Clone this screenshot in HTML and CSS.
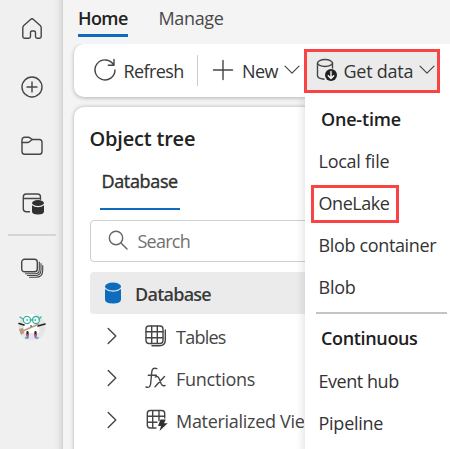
FILE: index.html
```html
<!DOCTYPE html>
<html lang="en">
<head>
<meta charset="utf-8">
<title>Object tree</title>
<link rel="stylesheet" href="styles.css">
</head>
<body>
<div class="app">
  <nav class="rail">
    <div class="rail-item"><svg width="24" height="24" viewBox="0 0 24 24"><path d="M2.800 10.700q0-1.300 1-2.200l6.800-6.100q1.400-1.200 2.800 0l6.800 6.100q1 .9 1 2.200v8.800q0 1.700-1.700 1.700h-2.300q-1.700 0-1.700-1.700v-4q0-1.500-1.500-1.500h-2q-1.500 0-1.500 1.500v4q0 1.700-1.700 1.700H4.500q-1.700 0-1.700-1.700z"/></svg></div>
    <div class="rail-item"><svg width="24" height="24" viewBox="0 0 24 24"><circle cx="12" cy="12" r="10"/><path d="M12 7v10M7 12h10"/></svg></div>
    <div class="rail-item"><svg width="24" height="24" viewBox="0 0 24 24"><path d="M2 17.500V6q0-2.800 2.800-2.800h3.500q1 0 1.700.7L12.200 5.500h7q2.800 0 2.800 2.800v9.200q0 2.800-2.800 2.800H4.800Q2 20.300 2 17.500z"/><path d="M2 8.500h5.700q1 0 1.700-.7l2.800-2.300"/></svg></div>
    <div class="rail-item"><svg width="24" height="24" viewBox="0 0 24 24"><path d="M9.500 19.700H6.300q-3 0-3-3V5q0-3 3-3h11.200q3 0 3 3v2.300M3.300 6.500h17.200"/><g class="solid"><ellipse cx="18" cy="11" rx="6" ry="2.900"/><path d="M12 13.200q2.200 2 6 2t6-2v6.300q0 3-6 3t-6-3z"/></g></svg></div>
    <hr class="rail-line">
    <div class="rail-item stack"><svg width="24" height="24" viewBox="0 0 24 24"><rect x="1.700" y="2.300" width="15.600" height="12.500" rx="2.800"/><path d="M19.300 5v7.500q0 4.300-4.300 4.300H5.500M21 6.500v6.500q0 5.500-6 5.500H7.500M22.700 8.500v5q0 6.800-7 6.800H9.500" stroke-width="1.100"/></svg></div>
    <div class="rail-item"><svg width="28" height="28" viewBox="0 0 28 28" class="avatar"><circle cx="14" cy="14" r="13.500" fill="#e5e5e5"/><path d="M4 4q9-7 18 1l-1 15H7z" fill="#fff"/><path d="M1 10.500l5 1.500M20 13l7-2" stroke="#222" stroke-width="1.700"/><path d="M3 19l4-2 14-6" stroke="#ba9b7d" stroke-width="1.500"/><path d="M1 16l4-1 1 5-3 2z" fill="#ba9b7d"/><g stroke="#35b7a1" stroke-width="1.300" fill="#fff"><circle cx="9" cy="7" r="3.700"/><circle cx="18" cy="7" r="3.500"/><path d="M2 4l3 2M12 7h3M21 6l2-2"/></g><path d="M9 7h.5M17 7h.5M13 12.500v1" stroke="#222" stroke-width="1"/><path d="M9.500 19v3M17.500 19v3" stroke="#222" stroke-width="2.200"/><path d="M9.500 22v2M17.500 22v2" stroke="#d13e9c" stroke-width="2.200"/><path d="M7.500 25h2.500M18 25h2" stroke="#35abc1" stroke-width="1.500"/></svg></div>
  </nav>
  <main class="main">
    <div class="tabs"><span class="tab active"><span class="t-home">Home</span></span><span class="tab t-manage">Manage</span></div>
    <div class="toolbar">
      <svg class="i-refresh" width="24" height="24" viewBox="0 0 24 24"><path d="M20.200 6.200A10 10 0 1 0 22 12M21 1.500v5.700h-5.700"/></svg>
      <span class="t-refresh">Refresh</span>
      <i class="sep"></i>
      <svg class="i-plus" width="22" height="22" viewBox="0 0 22 22"><path d="M11 1.500v19M1.500 11h19"/></svg>
      <span class="t-new">New</span>
      <svg class="chev" width="16" height="10" viewBox="0 0 16 10"><path d="M1 1.200l7 7 7-7"/></svg>
      <div class="get-data">
        <svg class="i-data" width="22" height="24" viewBox="0 0 22 24"><ellipse cx="9" cy="5" rx="7.500" ry="3.500"/><path d="M1.500 5v12.500q0 3 6.500 3.700M16.500 5v5"/><circle cx="15" cy="17" r="6" class="dot"/><path class="arrow" d="M15 13.500v7M12.300 17.800l2.700 2.700 2.700-2.700"/></svg>
        <span class="t-get">Get data</span>
        <svg class="chev" width="16" height="10" viewBox="0 0 16 10"><path d="M1 1.200l7 7 7-7"/></svg>
      </div>
    </div>
    <section class="panel">
      <h2><span class="t-object">Object tree</span></h2>
      <div class="panel-tab"><span class="t-dbtab">Database</span></div>
      <div class="search"><svg width="20" height="20" viewBox="0 0 20 20"><circle cx="8" cy="8" r="6.700"/><path d="M13 13l6 6"/></svg><span class="t-search">Search</span></div>
      <div class="row root"><svg width="18" height="22" viewBox="0 0 18 22"><ellipse cx="9" cy="4.500" rx="8" ry="4"/><path d="M1 7q3 2.700 8 2.700T17 7v10.500q0 4-8 4t-8-4z"/></svg><span class="t-dbrow">Database</span></div>
      <div class="row"><svg class="expand" width="10" height="18" viewBox="0 0 10 18"><path d="M1.200 1.500L8.800 9l-7.600 7.500"/></svg><svg class="kind" width="24" height="24" viewBox="0 0 24 24"><rect x="2" y="2" width="17" height="17.500" rx="3"/><path d="M7.700 2v17.500M13.300 2v17.500M2 7.800h17M2 13.700h17M21.300 6v10q0 5.700-5.700 5.700H8"/></svg><span class="t-tables">Tables</span></div>
      <div class="row"><svg class="expand" width="10" height="18" viewBox="0 0 10 18"><path d="M1.200 1.500L8.800 9l-7.600 7.500"/></svg><svg class="kind" width="24" height="24" viewBox="0 0 24 24"><path d="M12.800 2.700q-4.500-1.700-5 3L6.600 18q-.5 4.500-4.600 3M4.300 9.300h8M11.300 11q2.500-1.500 3.800 1.500l2.200 5.500q1.200 2.500 3.700 1.500M20.500 10.500L11 20.700"/></svg><span class="t-functions">Functions</span></div>
      <div class="row"><svg class="expand" width="10" height="18" viewBox="0 0 10 18"><path d="M1.200 1.500L8.800 9l-7.600 7.500"/></svg><svg class="kind" width="24" height="24" viewBox="0 0 24 24"><path d="M12 20H6.300q-3 0-3-3V5.500q0-3 3-3h11.400q3 0 3 3V10M8.700 2.500V20M15 2.500v10M3.300 8.300h17.400M3.300 14.200H13"/><path class="solid" d="M16.500 11.500h5.300L20 15.300h3.700L15.500 23l1.500-5h-3z"/></svg><span class="t-mat">Materialized Vie</span></div>
    </section>
    <div class="menu">
      <div class="head"><span class="t-one">One-time</span></div>
      <div class="item"><span class="t-local">Local file</span></div>
      <div class="item marked"><span class="t-onelake">OneLake</span></div>
      <div class="item"><span class="t-container">Blob container</span></div>
      <div class="item"><span class="t-blob">Blob</span></div>
      <hr>
      <div class="head"><span class="t-cont">Continuous</span></div>
      <div class="item"><span class="t-event">Event hub</span></div>
      <div class="item"><span class="t-pipe">Pipeline</span></div>
    </div>
  </main>
</div>
</body>
</html>
```

FILE: styles.css
```css
* { box-sizing: border-box; }
body { margin: 0; font: 18px/26px "Open Sans", "Noto Sans", sans-serif; color: #333; }
svg { display: block; flex: none; overflow: visible; fill: none; stroke: #454545; stroke-width: 1.4; stroke-linecap: round; stroke-linejoin: round; }
.avatar, .solid { stroke: none; }
.solid { fill: #303030; }
.app { display: flex; width: 450px; height: 449px; overflow: hidden; background: #f4f4f4; }
.rail { width: 63px; flex: none; background: linear-gradient(90deg, #f0f0f0 52px, #ececec 57px, #dadada 62px, #d0d0d0); }
.rail-item { height: 58.500px; display: flex; align-items: center; justify-content: center; }
.rail-item:first-child { height: 58px; }
.rail-line { height: 2px; width: 48px; margin: 0 0 0 8px; border: 0; background: #d5d5d5; }
.rail-item.stack { height: 66px; }
.rail-item:last-child { height: 51px; }
.main { position: relative; flex: 1; min-width: 0; }
.tabs { height: 44px; display: flex; padding: 5px 0 0 15px; gap: 30.500px; color: #484848; }
.tab { height: 32px; white-space: nowrap; }
.tab.active { width: 50px; border-bottom: 3px solid #0f6cbd; color: #222; font-weight: 600; }
.toolbar { height: 53px; margin-left: 11px; padding-left: 19px; display: flex; align-items: center; background: #fff; border-radius: 10px 0 0 10px; box-shadow: 0 1px 4px #0004; clip-path: inset(0 0 -6px -6px); }
.toolbar > span, .get-data > span { white-space: nowrap; }
.toolbar svg { position: relative; top: -1px; }
.toolbar .t-refresh { width: 61px; margin-left: 6.500px; }
.sep { width: 1px; height: 31px; margin: 0 15px 0 12.500px; background: #ccc; }
.i-plus { margin-left: -1px; }
.toolbar .t-new { width: 37px; margin-left: 8px; }
.toolbar .chev { margin-left: 5px; margin-top: 1px; stroke-width: 1.2; }
.get-data { width: 136px; height: 44px; flex: none; margin-left: 4px; padding-left: 9px; display: flex; align-items: center; border: 3px solid #fa4444; background: #ebebeb; }
.get-data .t-get { width: 70px; margin-left: 5.500px; }
.dot { fill: #222; stroke: none; }
.arrow { stroke: #fff; }
.panel { height: 360px; margin: 10px 0 0 11px; padding: 18px 0 0 16px; background: #fff; border-radius: 10px 0 0 0; box-shadow: 0 0 4px #0004; }
h2 { margin: 0 0 0 -.5px; height: 28px; font-size: 20px; line-height: 28px; font-weight: 600; color: #222; }
.panel-tab { width: 80px; height: 43px; margin: 14px 0 0 10px; padding-left: 1.500px; border-bottom: 2px solid #0f6cbd; color: #303030; -webkit-text-stroke: .4px #303030; line-height: 28px; }
.search { height: 42px; margin: 10px 0 0 -.5px; padding-left: 17px; display: flex; align-items: center; gap: 10px; border: 1px solid #cfcfcf; border-radius: 4px; color: #707070; }
.search svg { stroke: #666; position: relative; top: -1px; }
.row { height: 42px; padding: 2px 0 0 17px; display: flex; align-items: center; white-space: nowrap; color: #444; }
.row span { padding-top: 2px; }
.row.root { margin: 10px 0 0 -.5px; padding: 0 0 0 14.500px; gap: 13px; background: #ebebeb; border-radius: 4px 0 0 4px; font-weight: 600; color: #3a3a3a; }
.root svg { fill: #0f6cbd; stroke: none; }
.kind { margin: 0 8px 0 27px; }
.menu { position: absolute; left: 242px; top: 93px; width: 145px; height: 356px; padding-top: 6px; background: #fff; box-shadow: -3px 5px 7px #00000018; }
.head { height: 42px; padding: 7px 0 0 16px; color: #202020; font-weight: 600; white-space: nowrap; }
.item { height: 42px; padding: 7px 0 0 13.500px; white-space: nowrap; }
.marked { width: 88px; height: 38px; margin: 2px 0 2px 6px; padding: 2px 0 0 4.500px; border: 3px solid #fa4444; }
.menu hr { height: 2px; margin: 3px 3px 4px 11px; border: 0; background: #c4c4c4; }
.menu hr ~ .item { padding-top: 8px; }

/* Optical tracking per label */
.t-home { letter-spacing: -.6px; }
.t-manage, .t-cont, .t-dbtab, .t-container { letter-spacing: -.35px; }
.t-local, .t-pipe, .t-functions, .t-get, .t-blob { letter-spacing: -.25px; }
.t-object, .t-one { letter-spacing: -.2px; }
.t-onelake, .t-event { letter-spacing: -.45px; }
.t-refresh, .t-new { letter-spacing: -.6px; }
.t-search, .t-dbrow, .t-tables { letter-spacing: -.75px; }
.t-mat { letter-spacing: -.3px; width: 128px; overflow: hidden; }
```
